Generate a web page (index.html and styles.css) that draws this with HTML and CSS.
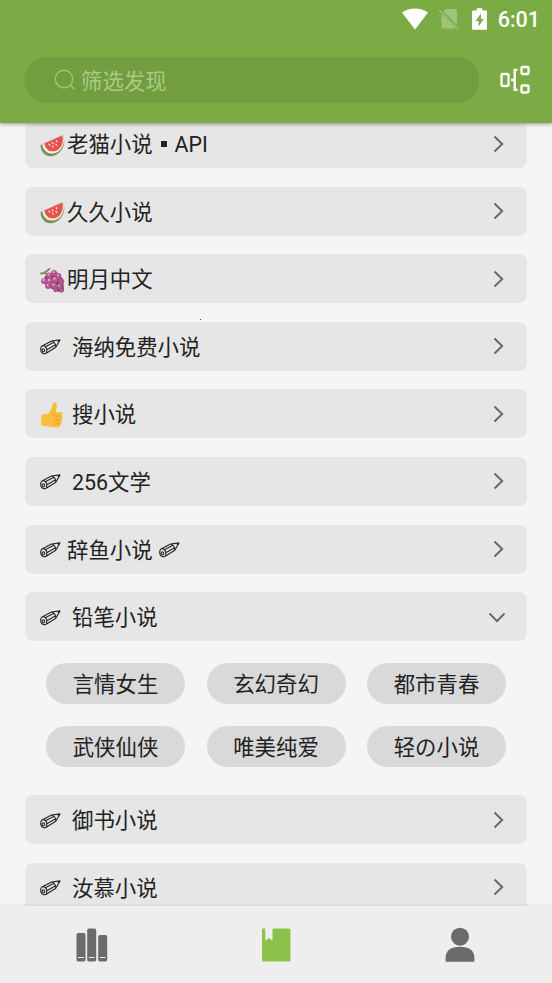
FILE: index.html
```html
<!DOCTYPE html>
<html lang="zh-CN">
<head>
<meta charset="utf-8">
<title>发现</title>
<link rel="stylesheet" href="styles.css">
</head>
<body>
<svg class="defs" aria-hidden="true">
  <symbol id="melon" viewBox="0 0 25 24">
    <path d="M.5 11.500 23 1.500c3.500 8.500-.5 17.500-8.500 20.500C7 24.500.8 20 .5 11.500z" fill="#78905a"/>
    <path d="M2.200 10.700 23 1.500c2.600 7.800-1 15.700-7.700 18C9 21.500 3.200 17.700 2.200 10.700z" fill="#f4efda"/>
    <path d="M4.200 9.900 22.200 1.900c1.900 6.700-1 13.600-6.700 15.500-5.400 1.700-10-1.500-11.300-7.500z" fill="#e4534f"/>
    <path d="m9 10.600.8.900m2.500-2.300.7.900m3.400-2.900.4 1m-4.200 4.500.5.800m2.900-2.600.5.900" stroke="#fbe2d4" stroke-width="1.300" stroke-linecap="round"/>
  </symbol>
  <symbol id="grape" viewBox="0 0 25 25">
    <path d="M1 5.500C4 6 6.500 3.500 9.300 1M4.800 4.500 8 8" fill="none" stroke="#7f8b68" stroke-width="2" stroke-linecap="round"/>
    <path d="M5 8 17 4l6 7 1 12-5 1-9-4-7-5z" fill="#7d3b63"/>
    <g fill="#b2578f"><circle cx="9" cy="7.500" r="2.900"/><circle cx="14" cy="5" r="3"/><circle cx="18.500" cy="8" r="2.900"/><circle cx="4" cy="13" r="3"/><circle cx="9.500" cy="13" r="3.100"/><circle cx="15" cy="11.500" r="3.100"/><circle cx="21.300" cy="13.500" r="2.900"/><circle cx="8" cy="18" r="2.900"/><circle cx="14" cy="17.500" r="3"/><circle cx="19.500" cy="18.500" r="2.800"/><circle cx="15.500" cy="22" r="2.300"/><circle cx="21.500" cy="22.500" r="2.300"/></g>
    <g fill="#e3aacb"><circle cx="8.500" cy="6.500" r="1.100"/><circle cx="13.500" cy="4" r="1.100"/><circle cx="18" cy="7" r="1"/><circle cx="3.500" cy="12" r="1.300"/><circle cx="9" cy="12" r="1.200"/><circle cx="14.500" cy="10.500" r="1.200"/><circle cx="13.500" cy="16.500" r="1.100"/><circle cx="19" cy="17.500" r="1"/><circle cx="7.500" cy="17" r="1"/></g>
  </symbol>
  <symbol id="thumb" viewBox="0 0 24 26">
    <path d="M1.500 13 8 11.500C11 9 12 5.500 13 1.500c.4-1.800 3.600-1.600 3.800 1.700.1 2.500-.6 4.700-1 6.800H20.500c2.400 0 2.600 3.300.8 3.900 2 .5 1.800 3.600-.2 4 1.500.7 1.100 3.300-.7 3.600 1 1-.1 3.500-2.200 3.700-4 .3-7.200.3-10-1L1 23.500z" fill="#fbbd3a"/>
    <path d="M15.500 10c-1.800.4-2.800 1.600-2.500 3.300M15 14h6.300M15 18h6M14.500 21.700h5.500" fill="none" stroke="#e79a2d" stroke-width="1"/>
  </symbol>
  <symbol id="pencil" viewBox="0 0 21 16">
    <path d="M2 6.900 11.500 2l8.500-1.100-4.200 7.300-9.600 6C4 15.300 1.600 14.600 1 12.400.5 10.300.7 8 2 6.900zM2 6.900c2.400-.9 4.700 1.300 4.800 3.600 0 1.500-.1 2.700-.6 3.700M4.800 7.900l9.200-4.700M6.800 10.800l8.800-5M11.500 2l2.500 1.200 1.600 2.600.2 2.400M2.400 10.100c1.300-.8 2.700.4 2.300 1.800-.3 1.300-2.200 1.200-2.500 0z" fill="none" stroke="#262626" stroke-width="1.100" stroke-linejoin="round"/>
    <path d="m17 1.300 3-.4-1.500 2.600z" fill="#262626"/>
  </symbol>
  <symbol id="chev" viewBox="0 0 18 18">
    <path d="M5.500 1.500 13.200 9l-7.700 7.500" fill="none" stroke="#666" stroke-width="1.900"/>
  </symbol>
</svg>
<div class="app">
  <header class="header">
    <div class="status">
      <svg class="wifi" viewBox="0 0 28 22"><path d="M1 4.500C8.500-1 19.500-1 27 4.500L14 21.500z" fill="#fff"/></svg>
      <svg class="sim" viewBox="0 0 22 22"><path d="M8 1h9.500Q19 1 19 2.500V17L5.500 3.500zM3.500 6 18 20.500H5Q3.500 20.500 3.500 19z" fill="#a0c47b"/><path d="m1 2 19 19" stroke="#9fc17c" stroke-width="1.300"/></svg>
      <svg class="battery" viewBox="0 0 16 23"><path d="M5 0h6v2.500h4q1 0 1 1V22q0 1-1 1H1q-1 0-1-1V3.500q0-1 1-1h4z" fill="#fff"/><path d="M9.500 5.500 3.800 13.500H7v6l5.500-8H9.500z" fill="#7bab45"/></svg>
      <span class="clock">6:01</span>
    </div>
    <div class="toolbar">
      <div class="search">
        <svg class="lens" viewBox="0 0 22 22"><circle cx="10" cy="10" r="8.700"/><path d="m16 16 4.500 4.500"/></svg>
        <span class="hint">筛选发现</span>
      </div>
      <svg class="groups" viewBox="0 0 30 30"><g fill="none" stroke="#fff" stroke-width="2.300"><rect x="1.500" y="9" width="7" height="12" rx="1"/><path d="M17.500 4.800h-2.800v20h2.800M11 15h4"/><rect x="21.500" y="2" width="7" height="7" rx="1"/><rect x="21.500" y="20.500" width="7" height="7" rx="1"/></g></svg>
    </div>
  </header>
  <main class="content">
    <div class="list">
      <div class="row"><svg class="emoji"><use href="#melon"/></svg><span>老猫小说</span><i class="square"></i><span>API</span><svg class="chev"><use href="#chev"/></svg></div>
      <div class="row"><svg class="emoji"><use href="#melon"/></svg><span>久久小说</span><svg class="chev"><use href="#chev"/></svg></div>
      <div class="row"><svg class="emoji"><use href="#grape"/></svg><span>明月中文</span><svg class="chev"><use href="#chev"/></svg></div>
      <div class="row"><svg class="pencil wide"><use href="#pencil"/></svg><span>海纳免费小说</span><svg class="chev"><use href="#chev"/></svg></div>
      <div class="row"><svg class="emoji thumb"><use href="#thumb"/></svg><span>搜小说</span><svg class="chev"><use href="#chev"/></svg></div>
      <div class="row"><svg class="pencil wide"><use href="#pencil"/></svg><span>256文学</span><svg class="chev"><use href="#chev"/></svg></div>
      <div class="row"><svg class="pencil"><use href="#pencil"/></svg><span>辞鱼小说</span><svg class="pencil after"><use href="#pencil"/></svg><svg class="chev"><use href="#chev"/></svg></div>
      <div class="row"><svg class="pencil wide"><use href="#pencil"/></svg><span>铅笔小说</span><svg class="chev open"><use href="#chev"/></svg></div>
      <div class="chips">
        <span class="chip">言情女生</span><span class="chip">玄幻奇幻</span><span class="chip">都市青春</span>
        <span class="chip">武侠仙侠</span><span class="chip">唯美纯爱</span><span class="chip">轻の小说</span>
      </div>
      <div class="row"><svg class="pencil wide"><use href="#pencil"/></svg><span>御书小说</span><svg class="chev"><use href="#chev"/></svg></div>
      <div class="row"><svg class="pencil wide"><use href="#pencil"/></svg><span>汝慕小说</span><svg class="chev"><use href="#chev"/></svg></div>
    </div>
    <i class="speck"></i>
  </main>
  <nav class="tabs">
    <div class="tab"><svg class="tab-icon" viewBox="0 0 34 36"><g fill="#6b6b6b"><rect x="1.500" y="6" width="9" height="28.500" rx="1.800"/><rect x="12.200" y="1.500" width="9" height="33" rx="1.800"/><rect x="23.200" y="8" width="9" height="26.500" rx="1.800"/></g><path d="M3.200 30.500h5.600M13.900 30.500h5.600M24.900 30.500h5.600" stroke="#eee" stroke-width="1"/></svg></div>
    <div class="tab"><svg class="tab-icon" viewBox="0 0 34 36"><path d="M4 1.500h2.300V14l3.600-3 3.600 3V1.500h16.500q1.500 0 1.500 1.500v30q0 1.500-1.500 1.500H4.500Q3 34.500 3 33V2.500q0-1 1-1z" fill="#8bc34a"/></svg></div>
    <div class="tab"><svg class="tab-icon" viewBox="0 0 34 36"><g fill="#6b6b6b"><circle cx="17" cy="9.700" r="9"/><path d="M2.600 34.700V31C2.600 23.500 8 19.800 17 19.800S31.400 23.500 31.400 31v3.700z"/></g></svg></div>
  </nav>
</div>
</body>
</html>
```

FILE: styles.css
```css
* { box-sizing: border-box; }
body {
  margin: 0;
  font-family: Roboto, "Noto Sans CJK SC", sans-serif;
  font-size: 21.4px;
  color: #222;
}
svg { display: block; flex: none; }
.defs { position: absolute; width: 0; height: 0; }
.app {
  width: 552px;
  height: 983px;
  display: flex;
  flex-direction: column;
  background: #f5f5f5;
  overflow: hidden;
}
.header {
  position: relative;
  z-index: 1;
  flex: none;
  height: 123px;
  background: #7bab45;
  box-shadow: 0 1px 4px rgba(0, 0, 0, .4);
}
.status {
  height: 38px;
  padding-right: 12px;
  display: flex;
  justify-content: flex-end;
  align-items: center;
  color: #fff;
}
.wifi { width: 28px; height: 22px; margin-right: 9px; }
.sim { width: 22px; height: 22px; margin-right: 12px; }
.battery { width: 15px; height: 22px; margin: -1px 11px 0 0; }
.clock { font-size: 21.5px; font-weight: 500; line-height: 38px; padding-top: 2px; }
.toolbar {
  height: 84px;
  padding: 0 22px 0 24px;
  display: flex;
  align-items: center;
  justify-content: space-between;
}
.search {
  width: 455px;
  height: 46px;
  padding-left: 30px;
  display: flex;
  align-items: center;
  gap: 5px;
  border-radius: 23px;
  background: #729e40;
  color: #a9cb83;
}
.hint { padding-bottom: 2px; }
.lens { width: 22px; height: 22px; fill: none; stroke: #a0c577; stroke-width: 1.4; }
.groups { width: 30px; height: 30px; }
.content { position: relative; flex: 1; min-height: 0; overflow: hidden; }
.list {
  margin-top: -4px;
  padding: 0 25px;
  display: flex;
  flex-direction: column;
  gap: 18.6px;
}
.row {
  flex: none;
  height: 49px;
  padding: 0 20px 0 15px;
  display: flex;
  align-items: center;
  line-height: 47px;
  white-space: nowrap;
  border-radius: 8px;
  background: #e6e6e6;
}
.row span { padding-top: 2px; }
.emoji { width: 25px; height: 25px; margin: 3px 2px 0 0; }
.thumb { width: 24px; height: 26px; margin-right: 8px; }
.pencil { width: 21px; height: 16px; margin: 2px 6px 0 0; }
.wide { margin-right: 11px; }
.after { margin-left: 6px; }
.square { width: 6px; height: 6px; margin: 0 8px 0 8px; background: #222; }
.chev { width: 18px; height: 18px; margin-left: auto; }
.open { transform: translateX(-1px) rotate(90deg); }
.chips {
  padding: 3px 21px 10px;
  display: grid;
  grid-template-columns: repeat(3, 139px);
  justify-content: space-between;
  row-gap: 22px;
}
.chip {
  height: 41px;
  padding-top: 1px;
  border-radius: 21px;
  background: #d9d9d9;
  line-height: 41px;
  text-align: center;
}
.speck {
  position: absolute;
  left: 200px;
  top: 196px;
  width: 1px;
  height: 1px;
  background: #3b3b8f;
}
.tabs {
  position: relative;
  flex: none;
  height: 77px;
  display: grid;
  grid-template-columns: repeat(3, 1fr);
  background: #eee;
  box-shadow: 0 -1px 2px rgba(0, 0, 0, .08);
}
.tab { display: flex; align-items: center; justify-content: center; }
.tab-icon { width: 34px; height: 36px; }
```
